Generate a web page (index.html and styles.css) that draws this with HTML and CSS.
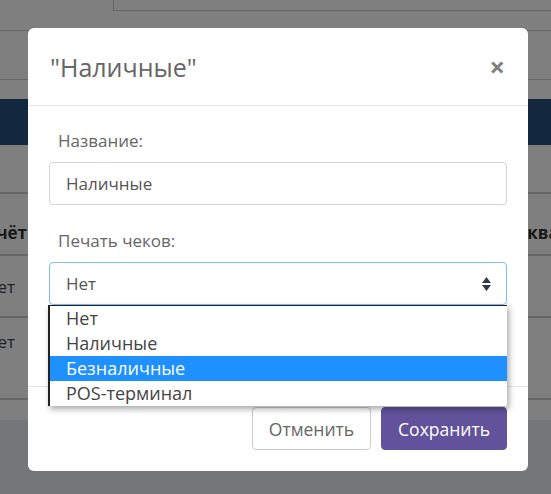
FILE: index.html
```html
<!DOCTYPE html>
<html lang="ru">
<head>
    <meta charset="UTF-8">
    <meta name="viewport" content="width=device-width, initial-scale=1.0">
    <title>Типы оплаты</title>
    <link rel="stylesheet" href="styles.css">
</head>
<body>

    <!-- Page under the modal -->
    <div class="page">
        <div class="topbar">
            <div class="topbar-box"></div>
        </div>
        <div class="toolbar"></div>
        <div class="spacer"></div>
        <div class="navbar"></div>
        <div class="table-head-gap"></div>
        <div class="table-row table-header">
            <div class="cell cell-first">Учёт</div>
            <div class="cell cell-fill"></div>
            <div class="cell cell-last">Эквайринг</div>
        </div>
        <div class="table-row">
            <div class="cell cell-first cell-narrow">Нет</div>
        </div>
        <div class="table-row table-row-tall">
            <div class="cell cell-first cell-narrow">Нет</div>
        </div>
        <div class="table-foot"></div>
    </div>

    <div class="backdrop"></div>

    <!-- Modal -->
    <div class="modal">
        <div class="modal-content">
            <div class="modal-header">
                <h4 class="modal-title">"Наличные"</h4>
                <span class="close">&times;</span>
            </div>
            <div class="modal-body">
                <div class="form-group">
                    <label class="form-label">Название:</label>
                    <div class="form-control">Наличные</div>
                </div>
                <div class="form-group">
                    <label class="form-label">Печать чеков:</label>
                    <div class="select-wrap">
                        <div class="form-control select-control">
                            <span>Нет</span>
                            <svg class="select-arrow" width="9" height="14" viewBox="0 0 9 14">
                                <path d="M4.5 0 L9 6 L0 6 Z M0 8 L9 8 L4.5 14 Z" fill="#343a40"/>
                            </svg>
                        </div>
                        <ul class="select-list">
                            <li>Нет</li>
                            <li>Наличные</li>
                            <li class="selected">Безналичные</li>
                            <li>POS-терминал</li>
                        </ul>
                    </div>
                </div>
            </div>
            <div class="modal-footer">
                <button class="btn btn-cancel">Отменить</button>
                <button class="btn btn-save">Сохранить</button>
            </div>
        </div>
    </div>

</body>
</html>
```

FILE: styles.css
```css
/* General Body Styles */
body {
    margin: 0;
    font-family: 'Open Sans', 'Liberation Sans', sans-serif;
    background: #e9ecef;
    height: 494px;
    overflow: hidden;
}

/* Page behind the modal */
.page {
    background: #fff;
}

.topbar {
    height: 31px;
    border-bottom: 1px solid #ccc;
    box-sizing: border-box;
}

.topbar-box {
    margin-left: 113px;
    height: 11px;
    border-left: 1px solid #ccc;
    border-bottom: 1px solid #ccc;
    box-sizing: border-box;
}

.toolbar {
    height: 49px;
    border-bottom: 1px solid #ccc;
    box-sizing: border-box;
}

.spacer {
    height: 19px;
}

.navbar {
    height: 46px;
    background: #27507c;
}

.table-head-gap {
    height: 47px;
    border-bottom: 2px solid #ccc;
}

.table-row {
    display: flex;
    align-items: center;
    height: 60px;
    border-bottom: 2px solid #ccc;
    color: #444;
    font-size: 17px;
}

.table-row-tall {
    height: 82px;
    align-items: flex-start;
    padding-top: 12px;
    box-sizing: border-box;
}

.table-header {
    font-weight: 700;
    color: #333;
    padding-top: 16px;
    box-sizing: border-box;
    height: 62px;
}

.cell {
    white-space: nowrap;
}

.cell-first {
    width: 27px;
    display: flex;
    justify-content: flex-end;
}

.cell-narrow {
    width: 15px;
}

.cell-fill {
    flex: 1;
}

.cell-last {
    width: 35px;
    overflow: hidden;
}

.table-foot {
    height: 20px;
    background: #fff;
}

/* Dim layer */
.backdrop {
    position: fixed;
    inset: 0;
    background: rgba(0, 0, 0, 0.5);
}

/* Modal window */
.modal {
    position: fixed;
    top: 28px;
    left: 28px;
    width: 500px;
}

.modal-content {
    background: #fff;
    border-radius: 6px;
}

.modal-header {
    display: flex;
    align-items: center;
    justify-content: space-between;
    height: 77px;
    padding: 0 22px;
    border-bottom: 1px solid #e5e5e5;
}

.modal-title {
    margin: 0;
    font-size: 25px;
    font-weight: 400;
    color: #666;
}

.close {
    font-size: 27px;
    font-weight: 700;
    color: #808080;
    line-height: 1;
    margin-right: 1px;
}

.modal-body {
    padding: 23px 21px 81px;
}

.form-group + .form-group {
    margin-top: 24px;
}

.form-label {
    display: block;
    padding-left: 9px;
    font-size: 17px;
    line-height: 24px;
    color: #666;
    margin-bottom: 9px;
}

.form-control {
    height: 43px;
    box-sizing: border-box;
    border: 1px solid #ced4da;
    border-radius: 4px;
    padding: 0 16px;
    display: flex;
    align-items: center;
    font-size: 17px;
    color: #555;
}

.select-wrap {
    position: relative;
}

.select-control {
    justify-content: space-between;
    border-color: #80bdff;
    padding-right: 15px;
}

/* Open native list */
.select-list {
    position: absolute;
    top: 43px;
    left: -1px;
    right: 0;
    margin: 0;
    padding: 0;
    list-style: none;
    background: #fff;
    border-left: 2px solid #222;
    border-top: 1px solid #222;
    box-shadow: 2px 3px 6px rgba(0, 0, 0, 0.35);
    z-index: 2;
}

.select-list li {
    height: 25px;
    line-height: 25px;
    padding-left: 16px;
    font-size: 18px;
    color: #444;
}

.select-list li.selected {
    background: #1e90ff;
    color: #fff;
}

.modal-footer {
    display: flex;
    justify-content: flex-end;
    gap: 10px;
    padding: 20px 21px 21px;
    border-top: 1px solid #e5e5e5;
}

/* Button Styles */
.btn {
    height: 43px;
    padding: 0 16px;
    font-family: inherit;
    font-size: 17.5px;
    border-radius: 4px;
    cursor: pointer;
}

.btn-cancel {
    background: #fff;
    color: #666;
    border: 1px solid #ccc;
}

.btn-save {
    background: #61529b;
    color: #fff;
    border: 1px solid #61529b;
}
```
